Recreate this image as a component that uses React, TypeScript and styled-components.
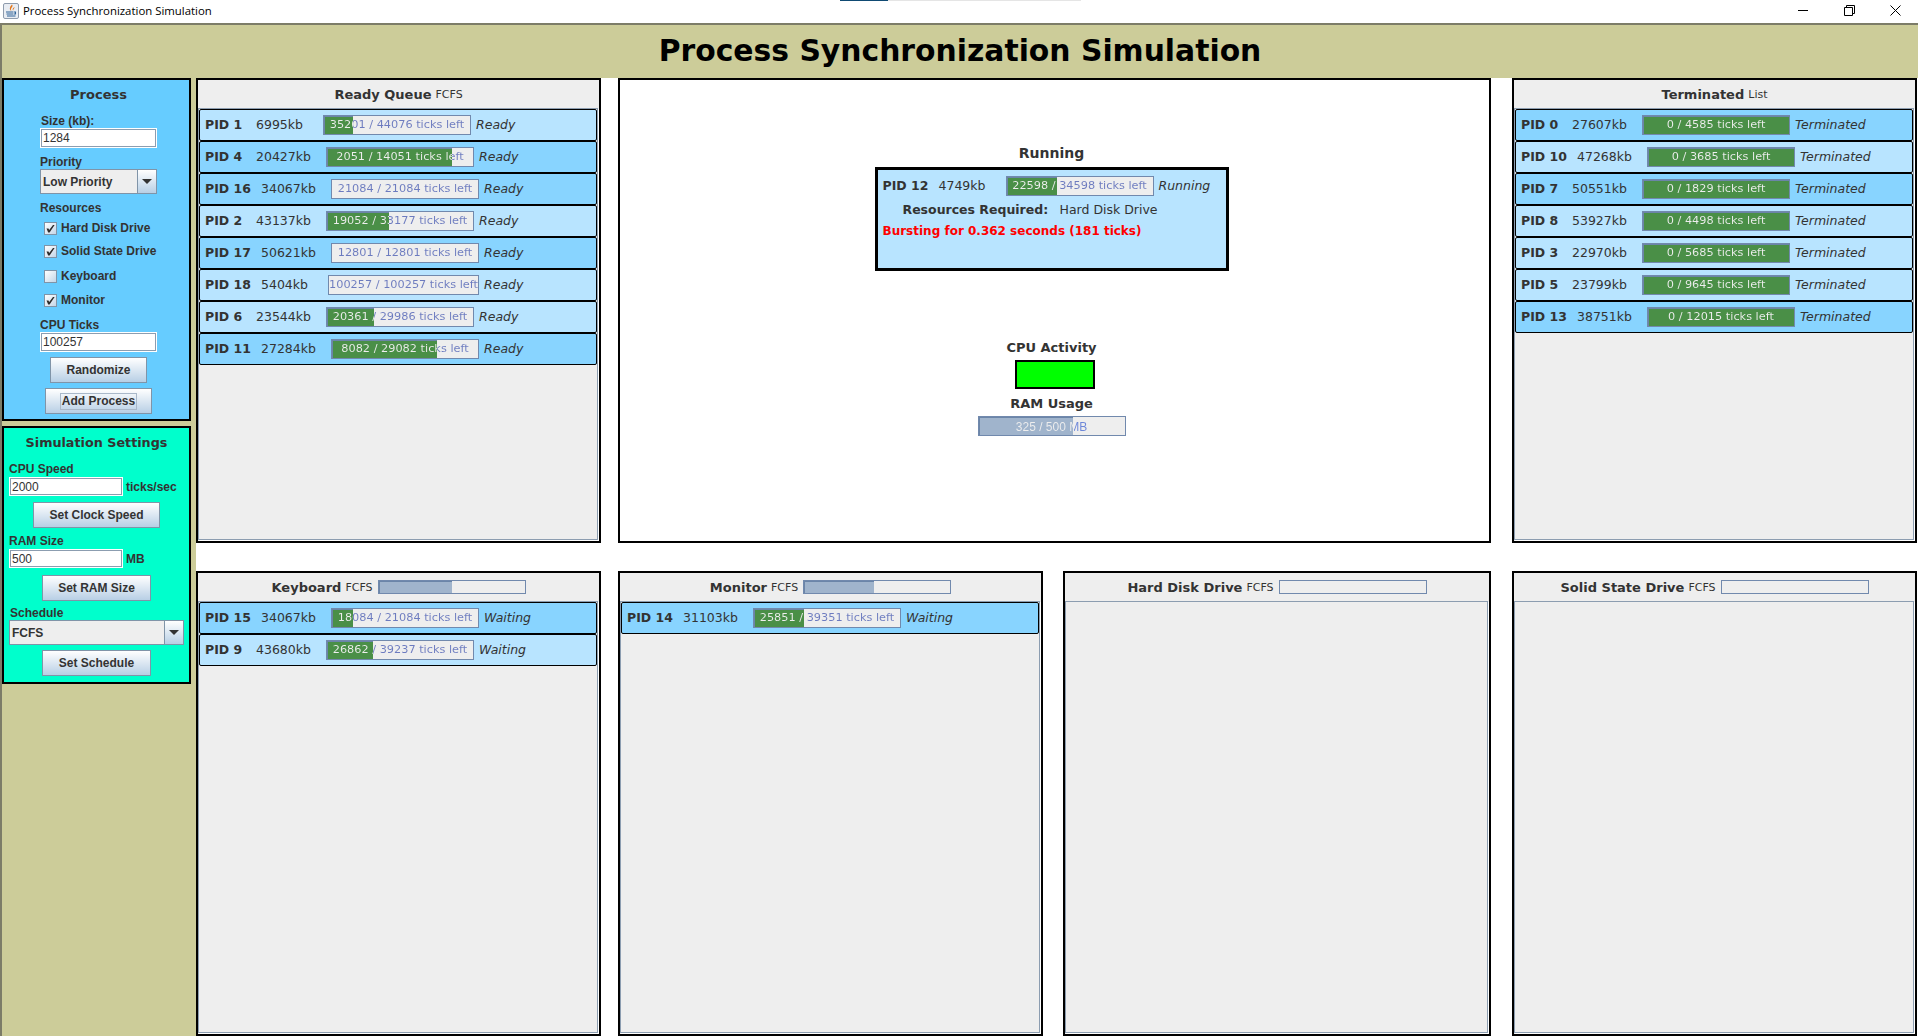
import styled, { createGlobalStyle } from "styled-components"

const GlobalStyle = createGlobalStyle`
  html, body {
    margin: 0;
    padding: 0;
    background: #fff;
    overflow: hidden;
  }
  * {
    box-sizing: border-box;
  }
`

const Window = styled.div`
  width: 1918px;
  height: 1036px;
  display: flex;
  flex-direction: column;
  overflow: hidden;
  position: relative;
  font-family: "DejaVu Sans", sans-serif;
  color: #333;
`

const TitleBar = styled.div`
  height: 25px;
  flex: none;
  display: flex;
  align-items: center;
  padding: 0 0 2px 3px;
  background: #fff;
  border-bottom: 2px solid #7c7c68;
  font-family: "Open Sans", sans-serif;
  font-size: 11.4px;
  color: #000;
`

const TitleText = styled.span`
  flex: 1;
  margin-left: 4px;
`

const WindowButton = styled.button`
  width: 46px;
  height: 23px;
  padding: 0;
  border: none;
  background: none;
  display: flex;
  align-items: center;
  justify-content: center;
`

const LoadStrip = styled.div`
  position: absolute;
  left: 840px;
  top: 0;
  width: 241px;
  height: 1px;
  background: linear-gradient(90deg, #0f4a73 0 48px, #e5e5e5 48px);
`

const Header = styled.header`
  height: 53px;
  flex: none;
  display: flex;
  align-items: center;
  justify-content: center;
  padding-bottom: 2px;
  background: #cccc99;
  border-left: 2px solid #7c7c68;
  font-size: 29.8px;
  font-weight: 700;
  color: #000;
`

const Body = styled.div`
  flex: 1;
  display: flex;
  min-height: 0;
`

const Sidebar = styled.aside`
  width: 196px;
  flex: none;
  display: flex;
  flex-direction: column;
  gap: 5px;
  background: #cccc99;
  border-left: 2px solid #7c7c68;
`

const ControlPanel = styled.section<{ $bg: string; $height: number; $inset: number }>`
  width: 189px;
  height: ${(p) => p.$height}px;
  flex: none;
  display: flex;
  flex-direction: column;
  padding: 6px 0 0 ${(p) => p.$inset}px;
  background: ${(p) => p.$bg};
  border: 2px solid #000;
`

const ControlTitle = styled.h2<{ $size: number }>`
  margin: 0;
  height: 16px;
  line-height: 18px;
  text-align: center;
  font-size: ${(p) => p.$size}px;
  font-weight: 700;
  color: #333;
`

const FormLabel = styled.label<{ $top: number; $left: number }>`
  display: block;
  height: 14px;
  line-height: 16px;
  margin: ${(p) => p.$top}px 0 0 ${(p) => p.$left}px;
  font-family: "Liberation Sans", sans-serif;
  font-size: 12px;
  font-weight: 700;
  color: #333;
`

const InputRow = styled.div<{ $top: number; $left: number }>`
  display: flex;
  align-items: center;
  gap: 3px;
  margin: ${(p) => p.$top}px 0 0 ${(p) => p.$left}px;
  font-family: "Liberation Sans", sans-serif;
  font-size: 12px;
  font-weight: 700;
  color: #333;
`

const TextField = styled.input<{ $width: number; $height: number }>`
  width: ${(p) => p.$width}px;
  height: ${(p) => p.$height}px;
  padding: 0 0 0 2px;
  border: 1px solid #fff;
  box-shadow: inset 0 0 0 1px #8c9db0;
  outline: none;
  background: #fff;
  font-family: "Liberation Sans", sans-serif;
  font-size: 12px;
  color: #333;
`

const Combo = styled.div<{ $width: number; $top: number; $left: number }>`
  width: ${(p) => p.$width}px;
  height: 25px;
  margin: ${(p) => p.$top}px 0 0 ${(p) => p.$left}px;
  display: flex;
  border: 1px solid #8094a8;
  background: #eee;
  font-family: "Liberation Sans", sans-serif;
  font-size: 12px;
  font-weight: 700;
  color: #333;
`

const ComboValue = styled.span`
  flex: 1;
  padding-left: 2px;
  line-height: 24px;
`

const ComboArrow = styled.span`
  width: 19px;
  flex: none;
  display: flex;
  align-items: center;
  justify-content: center;
  border-left: 1px solid #8094a8;
  background: linear-gradient(180deg, #fff, #b8cfe5);

  &::after {
    content: "";
    border-left: 5px solid transparent;
    border-right: 5px solid transparent;
    border-top: 5px solid #333;
  }
`

const CheckRow = styled.div<{ $top: number }>`
  display: flex;
  align-items: center;
  gap: 4px;
  height: 14px;
  margin: ${(p) => p.$top}px 0 0 36px;
  font-family: "Liberation Sans", sans-serif;
  font-size: 12px;
  font-weight: 700;
  color: #333;
`

const CheckBox = styled.span`
  width: 13px;
  height: 13px;
  flex: none;
  display: flex;
  align-items: center;
  justify-content: center;
  border: 1px solid #8094a8;
  background: linear-gradient(135deg, #fff, #c4d6e8);
`

const MetalButton = styled.button<{ $width: number; $top: number }>`
  align-self: center;
  width: ${(p) => p.$width}px;
  height: 26px;
  flex: none;
  margin-top: ${(p) => p.$top}px;
  padding: 0;
  border: 1px solid #8094a8;
  background: linear-gradient(180deg, #fff, #b8cfe5);
  font-family: "Liberation Sans", sans-serif;
  font-size: 12px;
  font-weight: 700;
  color: #333;
`

const FocusText = styled.span`
  display: inline-block;
  padding: 0 1px;
  line-height: 15px;
  border: 1px solid #a9b8c9;
`

const Main = styled.main`
  flex: 1;
  display: flex;
  flex-direction: column;
  gap: 28px;
  background: #fff;
  min-width: 0;
`

const PanelRow = styled.div`
  height: 465px;
  flex: none;
  display: flex;
`

const QueuePanel = styled.section<{ $width: number; $gap?: number }>`
  width: ${(p) => p.$width}px;
  flex: none;
  margin-left: ${(p) => p.$gap ?? 0}px;
  display: flex;
  flex-direction: column;
  border: 2px solid #000;
  background: #eee;
`

const QueueHeader = styled.div`
  height: 28px;
  flex: none;
  display: flex;
  align-items: center;
  justify-content: center;
  gap: 4px;
`

const QueueName = styled.span`
  font-size: 13px;
  font-weight: 700;
  color: #333;
`

const QueueKind = styled.span`
  font-size: 11px;
  color: #333;
`

const QueueMeter = styled.div`
  position: relative;
  width: 148px;
  height: 14px;
  margin-left: 1px;
  border: 1px solid #7189ad;
  background: #eee;
`

const QueueList = styled.div`
  flex: 1;
  display: flex;
  flex-direction: column;
  border: 1px solid #8c9db0;
  box-shadow: 1px 1px 0 #fff;
  margin-right: 1px;
  margin-bottom: 1px;
`

const ProcessRow = styled.div<{ $dark?: boolean }>`
  height: 32px;
  flex: none;
  display: flex;
  align-items: center;
  padding-left: 5px;
  border: 1px solid #000;
  border-radius: 2px;
  background: ${(p) => (p.$dark ? "#88d4ff" : "#b8e4ff")};
  font-size: 12.5px;
`

const PidName = styled.span<{ $width: number }>`
  width: ${(p) => p.$width}px;
  flex: none;
  margin-bottom: 2px;
  font-weight: 700;
  color: #333;
`

const SizeText = styled.span<{ $width: number }>`
  width: ${(p) => p.$width}px;
  flex: none;
  margin-bottom: 2px;
  color: #333;
`

const StatusText = styled.span`
  margin: 0 0 2px 5px;
  font-style: italic;
  color: #333;
`

const TickBar = styled.div<{ $width: number }>`
  position: relative;
  width: ${(p) => p.$width}px;
  height: 20px;
  flex: none;
  border: 1px solid #7189ad;
  background: #eee;
`

const BarFill = styled.div<{ $color: string }>`
  position: absolute;
  left: 0;
  top: 0;
  bottom: 0;
  background: ${(p) => p.$color};
  box-shadow: inset 1px 1px 0 #6b85a8;
`

const BarLabel = styled.span`
  position: absolute;
  inset: 0;
  display: block;
  text-align: center;
  line-height: 17px;
  white-space: nowrap;
  font-size: 11.3px;
  color: transparent;
  -webkit-background-clip: text;
  background-clip: text;
`

const RamLabel = styled(BarLabel)`
  font-family: "Liberation Sans", sans-serif;
  font-size: 12px;
  line-height: 20px;
`

const RunningArea = styled.section<{ $width: number; $gap: number }>`
  width: ${(p) => p.$width}px;
  flex: none;
  margin-left: ${(p) => p.$gap}px;
  display: flex;
  flex-direction: column;
  align-items: center;
  padding: 65px 6px 0 0;
  border: 2px solid #000;
  background: #fff;
`

const StageHeading = styled.h3<{ $top: number; $size: number }>`
  margin: ${(p) => p.$top}px 0 0;
  height: 16px;
  line-height: 16px;
  font-size: ${(p) => p.$size}px;
  font-weight: 700;
  color: #333;
`

const RunningBox = styled.div`
  width: 354px;
  height: 104px;
  margin-top: 6px;
  border: 3px solid #000;
  background: #b8e4ff;
  font-size: 12.5px;
`

const RunningTop = styled.div`
  height: 32px;
  display: flex;
  align-items: center;
  padding-left: 5px;
`

const ResourcesLine = styled.div`
  height: 16px;
  line-height: 16px;
  padding-left: 25px;
`

const ResourcesKey = styled.b`
  display: inline-block;
  width: 157px;
  color: #333;
`

const BurstLine = styled.div`
  height: 16px;
  line-height: 16px;
  margin-top: 5px;
  padding-left: 5px;
  font-size: 12px;
  font-weight: 700;
  color: #f00;
`

const CpuLight = styled.div`
  width: 80px;
  height: 29px;
  margin: 4px 0 0 6px;
  border: 2px solid #000;
  background: #0f0;
`

const RamBar = styled(TickBar)`
  margin-top: 4px;
`

type Proc = {
  pid: number
  size: number
  left: number
  total: number
  status: string
  dark?: boolean
}

const readyQueue: Proc[] = [
  { pid: 1, size: 6995, left: 35201, total: 44076, status: "Ready" },
  { pid: 4, size: 20427, left: 2051, total: 14051, status: "Ready", dark: true },
  { pid: 16, size: 34067, left: 21084, total: 21084, status: "Ready", dark: true },
  { pid: 2, size: 43137, left: 19052, total: 33177, status: "Ready" },
  { pid: 17, size: 50621, left: 12801, total: 12801, status: "Ready", dark: true },
  { pid: 18, size: 5404, left: 100257, total: 100257, status: "Ready" },
  { pid: 6, size: 23544, left: 20361, total: 29986, status: "Ready" },
  { pid: 11, size: 27284, left: 8082, total: 29082, status: "Ready", dark: true },
]

const terminated: Proc[] = [
  { pid: 0, size: 27607, left: 0, total: 4585, status: "Terminated", dark: true },
  { pid: 10, size: 47268, left: 0, total: 3685, status: "Terminated" },
  { pid: 7, size: 50551, left: 0, total: 1829, status: "Terminated", dark: true },
  { pid: 8, size: 53927, left: 0, total: 4498, status: "Terminated" },
  { pid: 3, size: 22970, left: 0, total: 5685, status: "Terminated" },
  { pid: 5, size: 23799, left: 0, total: 9645, status: "Terminated" },
  { pid: 13, size: 38751, left: 0, total: 12015, status: "Terminated", dark: true },
]

const keyboard: Proc[] = [
  { pid: 15, size: 34067, left: 18084, total: 21084, status: "Waiting", dark: true },
  { pid: 9, size: 43680, left: 26862, total: 39237, status: "Waiting" },
]

const monitor: Proc[] = [
  { pid: 14, size: 31103, left: 25851, total: 39351, status: "Waiting", dark: true },
]

const running: Proc = { pid: 12, size: 4749, left: 22598, total: 34598, status: "Running" }

const pidWidth = (pid: number) => (pid > 9 ? 56 : 51)
const sizeWidth = (size: number) => (size > 9999 ? 70 : 67)

function clipColors(pct: number, light: string, blue: string) {
  return `linear-gradient(90deg, ${light} ${pct}%, ${blue} ${pct}%)`
}

function Ticks({ proc }: { proc: Proc }) {
  const pct = (1 - proc.left / proc.total) * 100
  return (
    <TickBar $width={proc.total > 99999 ? 151 : 148}>
      <BarFill $color="#4a8f47" style={{ width: `${pct}%` }} />
      <BarLabel style={{ backgroundImage: clipColors(pct, "#eeeeee", "#6c7bbf") }}>
        {proc.left} / {proc.total} ticks left
      </BarLabel>
    </TickBar>
  )
}

function ProcRowContent({ proc }: { proc: Proc }) {
  return (
    <>
      <PidName $width={pidWidth(proc.pid)}>PID {proc.pid}</PidName>
      <SizeText $width={sizeWidth(proc.size)}>{proc.size}kb</SizeText>
      <Ticks proc={proc} />
      <StatusText>{proc.status}</StatusText>
    </>
  )
}

function Queue(props: {
  name: string
  kind: string
  width: number
  gap?: number
  meter?: number
  procs?: Proc[]
}) {
  return (
    <QueuePanel $width={props.width} $gap={props.gap}>
      <QueueHeader>
        <QueueName>{props.name}</QueueName>
        <QueueKind>{props.kind}</QueueKind>
        {props.meter !== undefined && (
          <QueueMeter>
            <BarFill $color="#a0b4cc" style={{ width: `${props.meter}%` }} />
          </QueueMeter>
        )}
      </QueueHeader>
      <QueueList>
        {(props.procs ?? []).map((p) => (
          <ProcessRow key={p.pid} $dark={p.dark}>
            <ProcRowContent proc={p} />
          </ProcessRow>
        ))}
      </QueueList>
    </QueuePanel>
  )
}

const CheckMark = () => (
  <svg width="9" height="9" viewBox="0 0 9 9">
    <path d="M0.5 4.5 L2.5 4.5 L3.2 6 L7 1 L8.6 1 L3.6 8.5 L2.2 8.5 Z" fill="#2c2c2c" />
  </svg>
)

const JavaIcon = () => (
  <svg width="16" height="16" viewBox="0 0 16 16">
    <rect x="0.5" y="0.5" width="15" height="15" rx="1.5" fill="#e9edf3" stroke="#8f9cad" />
    <path d="M9 1.5 C11 4 6.5 5 8.5 8 C6 6.5 6.5 4 9 1.5 Z M11.5 4 C11.5 6 9.5 6.5 10.5 8 C9 7 9.5 5 11.5 4 Z" fill="#e2761b" />
    <path d="M3 9 H10 M3.5 11 H10 M4 13 H12.5 M10.5 9 H12.5 V11 H10.5" stroke="#2f6398" strokeWidth="1.1" fill="none" />
  </svg>
)

export default function App() {
  return (
    <Window>
      <GlobalStyle />
      <LoadStrip />
      <TitleBar>
        <JavaIcon />
        <TitleText>Process Synchronization Simulation</TitleText>
        <WindowButton aria-label="minimize">
          <svg width="11" height="11" viewBox="0 0 11 11">
            <path d="M0 5.5 H10" stroke="#000" />
          </svg>
        </WindowButton>
        <WindowButton aria-label="restore">
          <svg width="11" height="11" viewBox="0 0 11 11">
            <path d="M0.5 2.5 H8.5 V10.5 H0.5 Z M2.5 2.5 V0.5 H10.5 V8.5 H8.5" stroke="#000" fill="none" />
          </svg>
        </WindowButton>
        <WindowButton aria-label="close">
          <svg width="11" height="11" viewBox="0 0 11 11">
            <path d="M0.5 0.5 L10.5 10.5 M10.5 0.5 L0.5 10.5" stroke="#000" />
          </svg>
        </WindowButton>
      </TitleBar>
      <Header>Process Synchronization Simulation</Header>
      <Body>
        <Sidebar>
          <ControlPanel $bg="#66ccff" $height={343} $inset={4}>
            <ControlTitle $size={13}>Process</ControlTitle>
            <FormLabel $top={11} $left={33}>Size (kb):</FormLabel>
            <InputRow $top={1} $left={32}>
              <TextField $width={117} $height={20} defaultValue="1284" />
            </InputRow>
            <FormLabel $top={6} $left={32}>Priority</FormLabel>
            <Combo $width={117} $top={1} $left={32}>
              <ComboValue>Low Priority</ComboValue>
              <ComboArrow />
            </Combo>
            <FormLabel $top={6} $left={32}>Resources</FormLabel>
            <CheckRow $top={7}><CheckBox><CheckMark /></CheckBox>Hard Disk Drive</CheckRow>
            <CheckRow $top={9}><CheckBox><CheckMark /></CheckBox>Solid State Drive</CheckRow>
            <CheckRow $top={11}><CheckBox />Keyboard</CheckRow>
            <CheckRow $top={10}><CheckBox><CheckMark /></CheckBox>Monitor</CheckRow>
            <FormLabel $top={10} $left={32}>CPU Ticks</FormLabel>
            <InputRow $top={1} $left={32}>
              <TextField $width={117} $height={20} defaultValue="100257" />
            </InputRow>
            <MetalButton $width={97} $top={5}>Randomize</MetalButton>
            <MetalButton $width={107} $top={5}><FocusText>Add Process</FocusText></MetalButton>
          </ControlPanel>
          <ControlPanel $bg="#00ffcc" $height={258} $inset={0}>
            <ControlTitle $size={12.75}>Simulation Settings</ControlTitle>
            <FormLabel $top={11} $left={5}>CPU Speed</FormLabel>
            <InputRow $top={2} $left={5}>
              <TextField $width={114} $height={19} defaultValue="2000" />
              ticks/sec
            </InputRow>
            <MetalButton $width={127} $top={6}>Set Clock Speed</MetalButton>
            <FormLabel $top={5} $left={5}>RAM Size</FormLabel>
            <InputRow $top={2} $left={5}>
              <TextField $width={114} $height={19} defaultValue="500" />
              MB
            </InputRow>
            <MetalButton $width={109} $top={7}>Set RAM Size</MetalButton>
            <FormLabel $top={4} $left={6}>Schedule</FormLabel>
            <Combo $width={175} $top={1} $left={5}>
              <ComboValue>FCFS</ComboValue>
              <ComboArrow />
            </Combo>
            <MetalButton $width={109} $top={5}>Set Schedule</MetalButton>
          </ControlPanel>
        </Sidebar>
        <Main>
          <PanelRow>
            <Queue name="Ready Queue" kind="FCFS" width={405} procs={readyQueue} />
            <RunningArea $width={873} $gap={17}>
              <StageHeading $top={0} $size={14}>Running</StageHeading>
              <RunningBox>
                <RunningTop>
                  <ProcRowContent proc={running} />
                </RunningTop>
                <ResourcesLine>
                  <ResourcesKey>Resources Required:</ResourcesKey>
                  Hard Disk Drive
                </ResourcesLine>
                <BurstLine>Bursting for 0.362 seconds (181 ticks)</BurstLine>
              </RunningBox>
              <StageHeading $top={69} $size={13}>CPU Activity</StageHeading>
              <CpuLight />
              <StageHeading $top={7} $size={13}>RAM Usage</StageHeading>
              <RamBar $width={148}>
                <BarFill $color="#a0b4cc" style={{ width: "65%" }} />
                <RamLabel style={{ backgroundImage: clipColors(65, "#eeeeee", "#6c86d8") }}>
                  325 / 500 MB
                </RamLabel>
              </RamBar>
            </RunningArea>
            <Queue name="Terminated" kind="List" width={405} gap={21} procs={terminated} />
          </PanelRow>
          <PanelRow>
            <Queue name="Keyboard" kind="FCFS" width={405} meter={50} procs={keyboard} />
            <Queue name="Monitor" kind="FCFS" width={425} gap={17} meter={48} procs={monitor} />
            <Queue name="Hard Disk Drive" kind="FCFS" width={428} gap={20} meter={0} />
            <Queue name="Solid State Drive" kind="FCFS" width={405} gap={21} meter={0} />
          </PanelRow>
        </Main>
      </Body>
    </Window>
  )
}
